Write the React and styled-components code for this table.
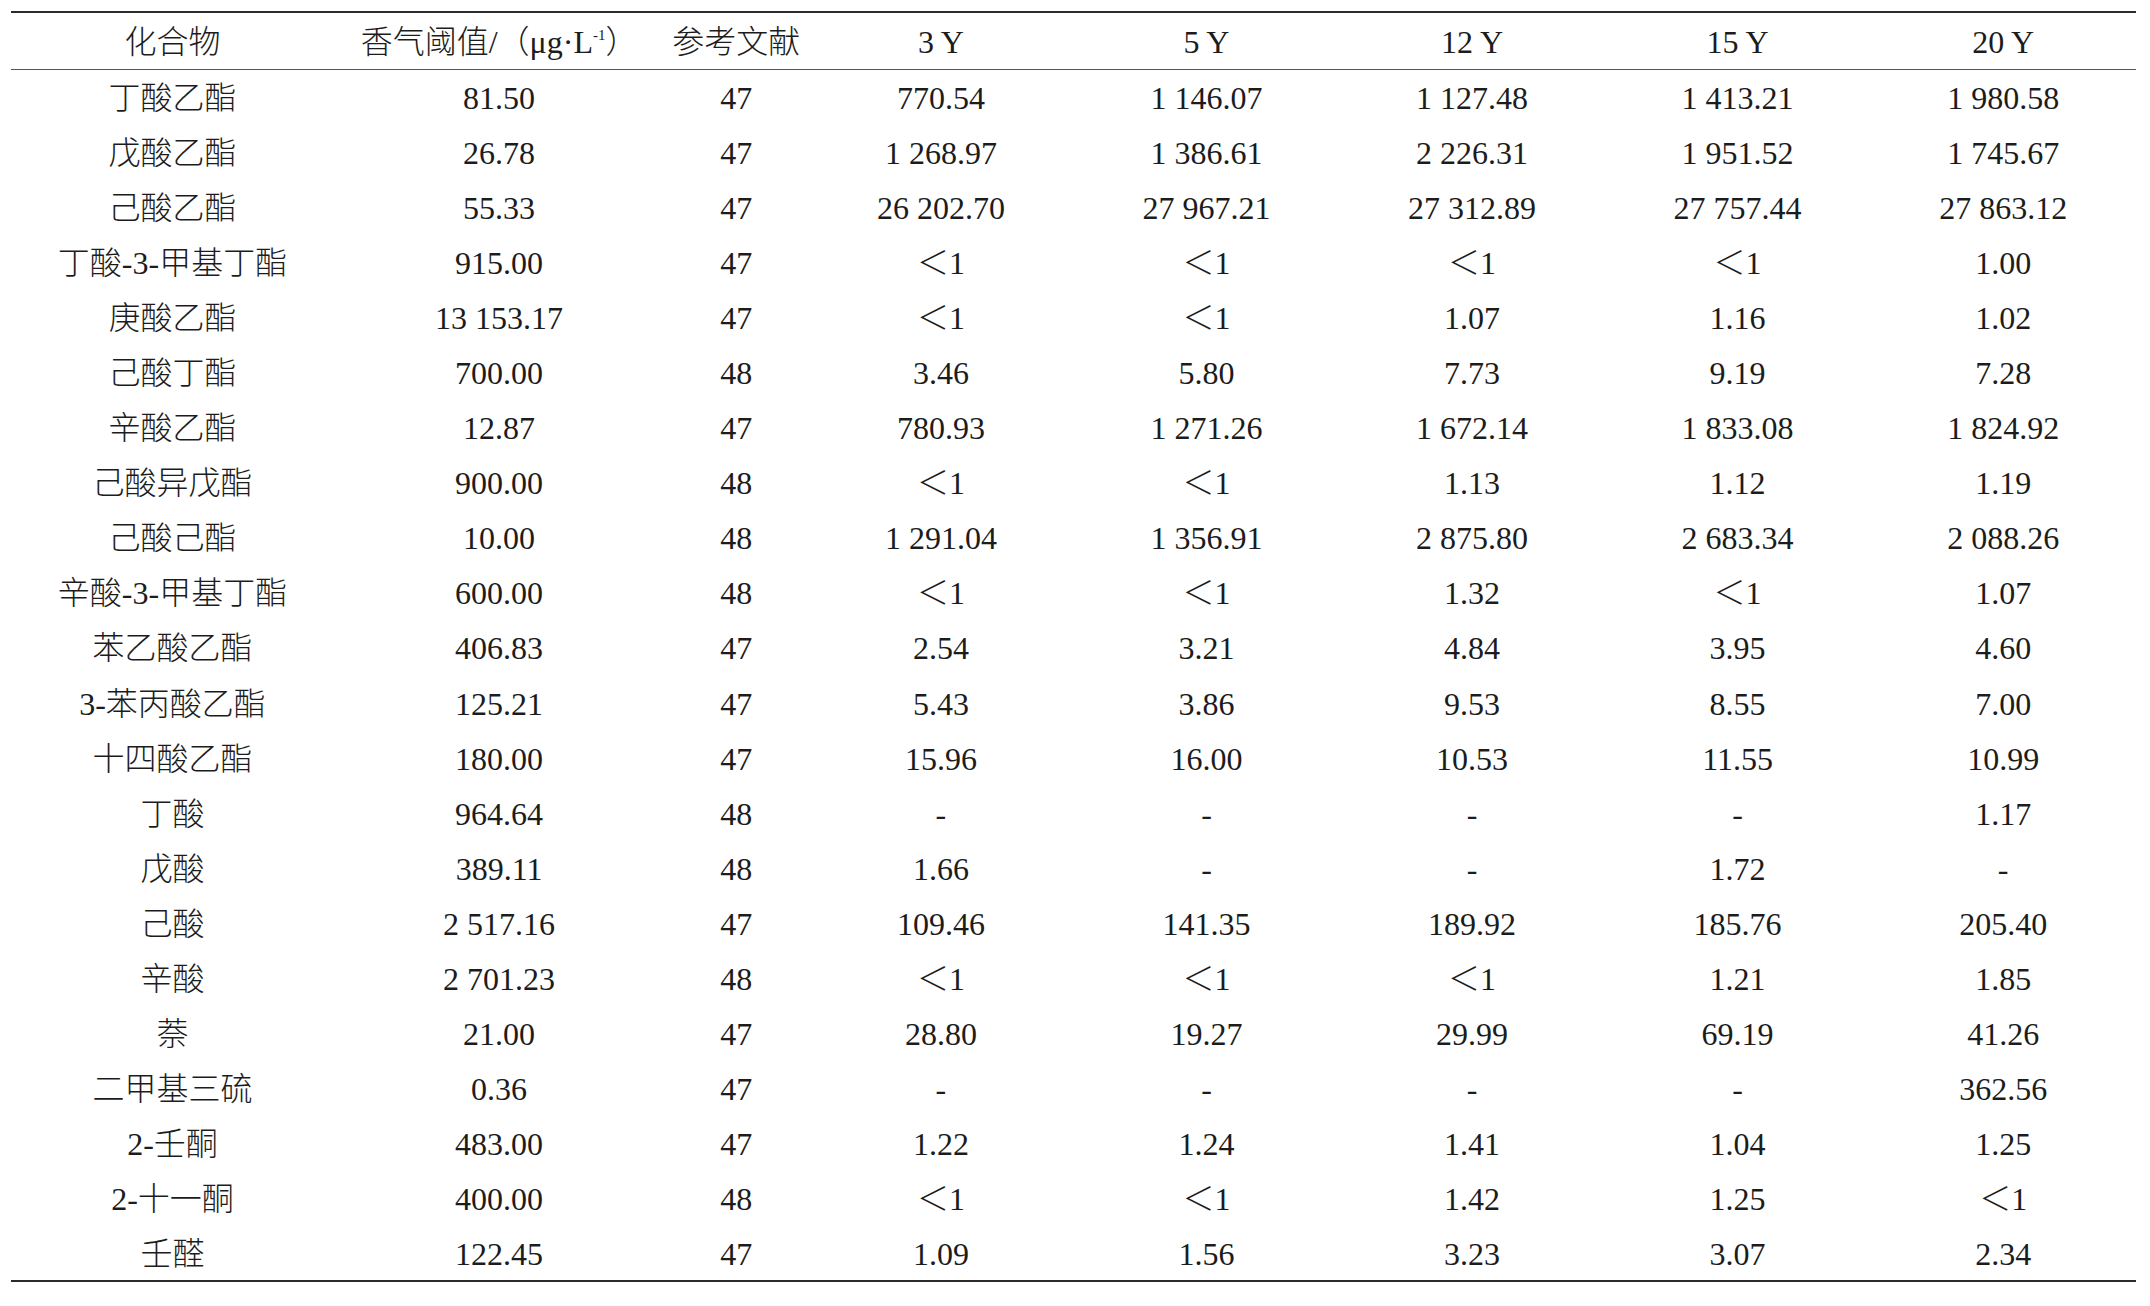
import React from 'react';
import styled, { createGlobalStyle } from 'styled-components';

const GlobalStyle = createGlobalStyle`
  html, body {
    margin: 0;
    padding: 0;
    background: #ffffff;
  }
`;

const headers = ['化合物', 'THRESHOLD', '参考文献', '3 Y', '5 Y', '12 Y', '15 Y', '20 Y'];

const rows = [
  ['丁酸乙酯', '81.50', '47', '770.54', '1 146.07', '1 127.48', '1 413.21', '1 980.58'],
  ['戊酸乙酯', '26.78', '47', '1 268.97', '1 386.61', '2 226.31', '1 951.52', '1 745.67'],
  ['己酸乙酯', '55.33', '47', '26 202.70', '27 967.21', '27 312.89', '27 757.44', '27 863.12'],
  ['丁酸-3-甲基丁酯', '915.00', '47', '＜1', '＜1', '＜1', '＜1', '1.00'],
  ['庚酸乙酯', '13 153.17', '47', '＜1', '＜1', '1.07', '1.16', '1.02'],
  ['己酸丁酯', '700.00', '48', '3.46', '5.80', '7.73', '9.19', '7.28'],
  ['辛酸乙酯', '12.87', '47', '780.93', '1 271.26', '1 672.14', '1 833.08', '1 824.92'],
  ['己酸异戊酯', '900.00', '48', '＜1', '＜1', '1.13', '1.12', '1.19'],
  ['己酸己酯', '10.00', '48', '1 291.04', '1 356.91', '2 875.80', '2 683.34', '2 088.26'],
  ['辛酸-3-甲基丁酯', '600.00', '48', '＜1', '＜1', '1.32', '＜1', '1.07'],
  ['苯乙酸乙酯', '406.83', '47', '2.54', '3.21', '4.84', '3.95', '4.60'],
  ['3-苯丙酸乙酯', '125.21', '47', '5.43', '3.86', '9.53', '8.55', '7.00'],
  ['十四酸乙酯', '180.00', '47', '15.96', '16.00', '10.53', '11.55', '10.99'],
  ['丁酸', '964.64', '48', '-', '-', '-', '-', '1.17'],
  ['戊酸', '389.11', '48', '1.66', '-', '-', '1.72', '-'],
  ['己酸', '2 517.16', '47', '109.46', '141.35', '189.92', '185.76', '205.40'],
  ['辛酸', '2 701.23', '48', '＜1', '＜1', '＜1', '1.21', '1.85'],
  ['萘', '21.00', '47', '28.80', '19.27', '29.99', '69.19', '41.26'],
  ['二甲基三硫', '0.36', '47', '-', '-', '-', '-', '362.56'],
  ['2-壬酮', '483.00', '47', '1.22', '1.24', '1.41', '1.04', '1.25'],
  ['2-十一酮', '400.00', '48', '＜1', '＜1', '1.42', '1.25', '＜1'],
  ['壬醛', '122.45', '47', '1.09', '1.56', '3.23', '3.07', '2.34'],
];

const colWidths = [323, 330, 144, 265.5, 265.5, 265.5, 265.5, 265.5];

const Page = styled.div`
  padding: 11px 0 0 11px;
`;

const Table = styled.table`
  width: 2125px;
  border-collapse: collapse;
  table-layout: fixed;
  border-top: 2px solid #2b2b2b;
  border-bottom: 2px solid #2b2b2b;
  font-family: "Liberation Serif", "Noto Sans CJK SC", serif;
  font-size: 32px;
  font-weight: 300;
  color: #1c1c1c;
`;

const HeadRow = styled.tr`
  height: 57px;
  border-bottom: 1px solid #555555;
`;

const Row = styled.tr`
  height: 55.1px;
`;

const Cell = styled.td`
  padding: 2px 0 0;
  text-align: center;
  vertical-align: middle;
  white-space: nowrap;
  line-height: 1;
`;

const HeadCell = styled(Cell).attrs({ as: 'th' })`
  font-weight: 300;
`;

const Sup = styled.sup`
  font-size: 15px;
  vertical-align: 13px;
  line-height: 0;
`;

const Threshold = () => (
  <>
    香气阈值/（μg·L<Sup>-1</Sup>）
  </>
);

export default function App() {
  return (
    <Page>
      <GlobalStyle />
      <Table>
        <colgroup>
          {colWidths.map((w, i) => (
            <col key={i} style={{ width: w }} />
          ))}
        </colgroup>
        <thead>
          <HeadRow>
            {headers.map((h, i) => (
              <HeadCell key={i}>{h === 'THRESHOLD' ? <Threshold /> : h}</HeadCell>
            ))}
          </HeadRow>
        </thead>
        <tbody>
          {rows.map((r, i) => (
            <Row key={i}>
              {r.map((c, j) => (
                <Cell key={j}>{c}</Cell>
              ))}
            </Row>
          ))}
        </tbody>
      </Table>
    </Page>
  );
}
